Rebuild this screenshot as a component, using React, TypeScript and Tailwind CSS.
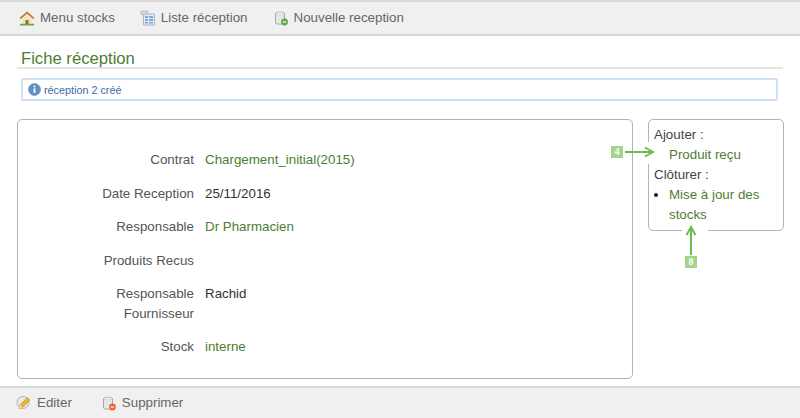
import React from 'react';

const font = "font-['Liberation_Sans',Arial,sans-serif]";

function HomeIcon() {
  return (
    <svg width="16" height="16" viewBox="0 0 16 16" className="-ml-px">
      <path d="M0.5 8 8 1.5 15.5 8l-1.3 1L8 3.8 1.8 9z" fill="#c8742a" />
      <path d="M3.5 8.5 8 4.8l4.5 3.7V14h-9z" fill="#f3e3c0" />
      <path d="M6.5 10h3v4h-3z" fill="#8f6a3a" />
      <path d="M1 13.8h14v1.7H1z" fill="#6fa53c" />
    </svg>
  );
}

function ListIcon() {
  return (
    <svg width="16" height="16" viewBox="0 0 16 16">
      <path d="M1 1h7v3.5H1z" fill="#d6d9db" stroke="#a9adb0" strokeWidth="0.6" />
      <path d="M3.5 4h11v11h-11z" fill="#e2ecf6" stroke="#a3b7cd" />
      <path d="M5 6h3v2H5zm4 0h4v2H9zm-4 3h3v2H5zm4 0h4v2H9zm-4 3h3v1.5H5zm4 0h4v1.5H9z" fill="#7ea6d0" />
    </svg>
  );
}

function DbIcon({ color }: { color: string }) {
  return (
    <svg width="16" height="16" viewBox="0 0 16 16">
      <path d="M2.5 3.5C2.5 2 11.5 2 11.5 3.5V13c0 1.5-9 1.5-9 0z" fill="#e6e7e8" stroke="#a5a8ab" />
      <ellipse cx="7" cy="3.6" rx="4" ry="1.2" fill="#f5f6f6" stroke="#b5b8ba" strokeWidth="0.5" />
      <circle cx="11.5" cy="12" r="3.4" fill={color} />
      <path d="M9.8 12h3.4" stroke="#fff" strokeWidth="1.2" />
    </svg>
  );
}

function EditIcon() {
  return (
    <svg width="16" height="16" viewBox="0 0 16 16">
      <circle cx="7" cy="7.5" r="6" fill="#e6e7e8" stroke="#b4b6b8" />
      <path d="M3 13.5 4 10l7.5-7.5 2.5 2.5L6.5 12.5z" fill="#eeb530" stroke="#b9801a" strokeWidth="0.6" />
      <path d="M3 13.5 4 10l2.5 2.5z" fill="#f7e2b0" />
    </svg>
  );
}

function InfoIcon() {
  return (
    <svg width="13" height="13" viewBox="0 0 13 13">
      <circle cx="6.5" cy="6.5" r="6" fill="#5f8fc0" stroke="#8aa6c4" />
      <circle cx="6.5" cy="3.6" r="1" fill="#fff" />
      <path d="M5.6 5.4h1.8v4.6H5.6z" fill="#fff" />
    </svg>
  );
}

function Badge({ label }: { label: string }) {
  return (
    <span className="flex h-[12px] w-[12px] items-center justify-center bg-[#a5d38a] font-['Liberation_Serif',serif] text-[10px] leading-none font-bold text-white">
      {label}
    </span>
  );
}

function ToolLink({ icon, label }: { icon: React.ReactNode; label: string }) {
  return (
    <a className="flex items-center gap-[5px] text-[13.33px] text-[#666]">
      {icon}
      <span>{label}</span>
    </a>
  );
}

const rows = [
  { label: 'Contrat', value: 'Chargement_initial(2015)', link: true, top: 'mt-[30px]' },
  { label: 'Date Reception', value: '25/11/2016', top: 'mt-[14px]' },
  { label: 'Responsable', value: 'Dr Pharmacien', link: true, top: 'mt-[13px]' },
  { label: 'Produits Recus', value: '', top: 'mt-[14px]' },
  { label: 'Responsable Fournisseur', value: 'Rachid', top: 'mt-[13px]' },
  { label: 'Stock', value: 'interne', link: true, top: 'mt-[13px]' },
];

export default function App() {
  return (
    <div className={`${font} flex h-[418px] w-[800px] flex-col overflow-hidden bg-white`}>
      <div className="flex h-[36px] shrink-0 items-center gap-[25px] border-t-2 border-b-2 border-[#d8d8d8] bg-[#f0f0f0] pl-[20px]">
        <ToolLink icon={<HomeIcon />} label="Menu stocks" />
        <ToolLink icon={<ListIcon />} label="Liste réception" />
        <ToolLink icon={<DbIcon color="#62a83c" />} label="Nouvelle reception" />
      </div>

      <div className="mx-[17px] mt-[12px] h-[21px] border-b-2 border-[#e4e4e4] pl-[4px] text-[16.67px] leading-[21px] text-[#4e7d32]">
        Fiche réception
      </div>

      <div className="mt-[9px] mr-[22px] ml-[21px] flex h-[23px] items-center gap-[3px] rounded-[2px] border-2 border-[#cfe0f5] pl-[5px] text-[10.8px] text-[#3a6ea5]">
        <InfoIcon />
        <span className="translate-y-px">réception 2 créé</span>
      </div>

      <div className="mt-[18px] mr-[16px] ml-[17px] flex items-start gap-[15px]">
        <div className="h-[260px] w-[616px] rounded-[5px] border border-[#b4b4b4] text-[13.33px] leading-[20px] text-[#444]">
          {rows.map((r) => (
            <div key={r.label} className={`flex ${r.top}`}>
              <div className="w-[176px] pl-[70px] text-right text-[#555]">{r.label}</div>
              <div className={`ml-[11px] ${r.link ? 'text-[#4e7d32]' : 'text-[#333]'}`}>{r.value}</div>
            </div>
          ))}
        </div>

        <div className="relative h-[112px] w-[136px] rounded-[5px] border border-[#b4b4b4] pt-[5px] pl-[5px] text-[13.33px] leading-[20px] text-[#444]">
          <div>Ajouter :</div>
          <div className="pl-[15px] text-[#4e7d32]">Produit reçu</div>
          <div>Clôturer :</div>
          <ul className="list-disc pl-[15px] text-[#4e7d32] marker:text-[#222]">
            <li>Mise à jour des stocks</li>
          </ul>

          {/* annotations over the card, white patch breaks its border */}
          <div className="absolute top-[22px] left-[-4px] h-[22px] w-[8px] bg-white" />
          <div className="absolute top-[26px] left-[-38px] flex items-center gap-[2px]">
            <Badge label="4" />
            <svg width="30" height="12" viewBox="0 0 30 12" fill="none" stroke="#6dbb4a" strokeWidth="2">
              <path d="M0 6h27M20 1.5l8 4.5-8 4.5" />
            </svg>
          </div>
          <div className="absolute top-[106px] left-[33px] h-[8px] w-[26px] bg-white" />
          <div className="absolute top-[105px] left-[36px] flex flex-col items-center gap-px">
            <svg width="12" height="30" viewBox="0 0 12 30" fill="none" stroke="#6dbb4a" strokeWidth="2">
              <path d="M6 30V3M1.500 10 6 2l4.500 8" />
            </svg>
            <Badge label="8" />
          </div>
        </div>
      </div>

      <div className="mt-auto flex h-[32px] shrink-0 items-center gap-[29px] border-t-2 border-[#d8d8d8] bg-[#f0f0f0] pl-[16px]">
        <ToolLink icon={<EditIcon />} label="Editer" />
        <ToolLink icon={<DbIcon color="#e8682a" />} label="Supprimer" />
      </div>
    </div>
  );
}
